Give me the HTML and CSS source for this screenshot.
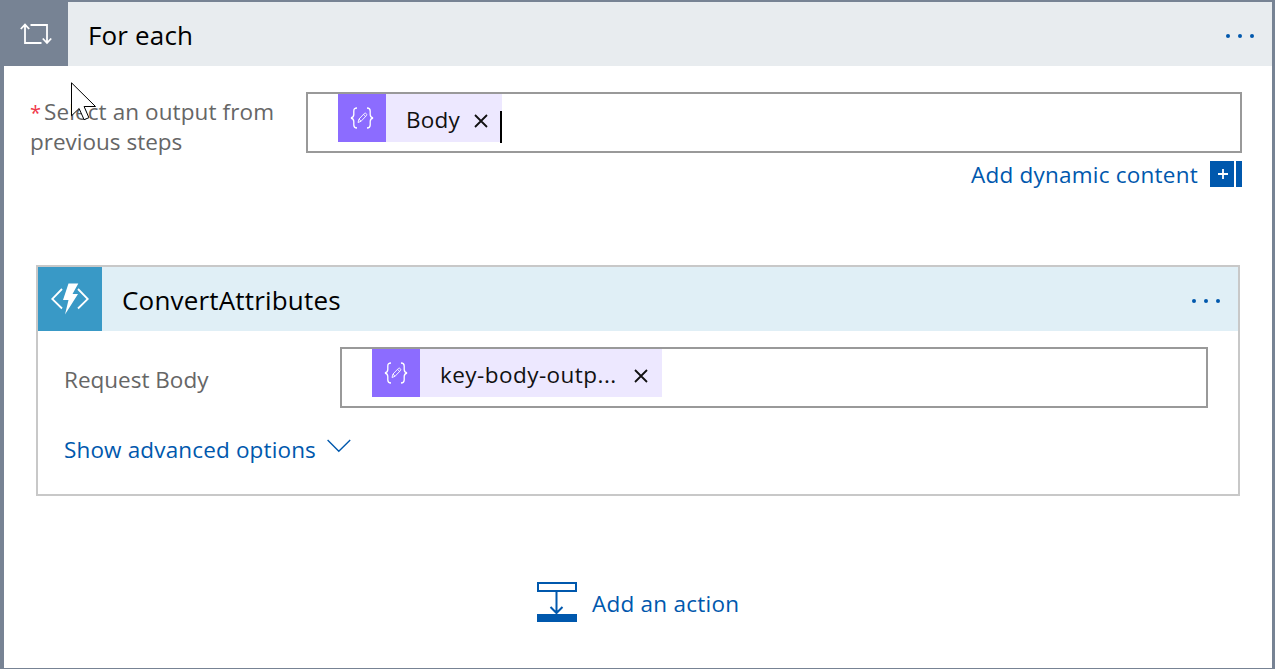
FILE: index.html
```html
<!DOCTYPE html>
<html lang="en">
<head>
<meta charset="utf-8">
<title>For each</title>
<link rel="stylesheet" href="styles.css">
</head>
<body>
<main class="scope">
  <header class="bar">
    <span class="bar-icon loop">
      <svg width="32" height="22" viewBox="0 0 32 22" fill="none" stroke="#fff" stroke-width="1.8"><path d="M5 2v18h16.500M.8 6 5 1.600 9.200 6M10.500 2H27v18M22.800 15.500 27 20l4.200-4.500"/></svg>
    </span>
    <h1 class="title t-foreach">For each</h1>
    <svg class="dots" width="30" height="6" viewBox="0 0 30 6" fill="#0058ad"><circle cx="3" cy="3" r="2"/><circle cx="15" cy="3" r="2"/><circle cx="27" cy="3" r="2"/></svg>
  </header>
  <section class="row output-row">
    <label class="label output-label"><span class="required">*</span><span class="t-select">Select an output from</span><br><span class="t-prev">previous steps</span></label>
    <div class="field">
      <div class="token">
        <span class="token-icon"><svg width="26" height="24" viewBox="0 0 26 24" fill="none" stroke="#fff" stroke-width="1.300"><path d="M8 2C5.500 2 4.800 3 4.800 5v3.500c0 2-.8 3-2.800 3.500 2 .5 2.800 1.500 2.800 3.500V19c0 2 .7 3 3.200 3M18 2c2.500 0 3.200 1 3.200 3v3.500c0 2 .8 3 2.800 3.500-2 .5-2.800 1.500-2.800 3.500V19c0 2-.7 3-3.200 3"/><path stroke-width=".9" d="m9 16.500 1-3.500 5.500-5.700c1-.8 3 .9 2 2.200L12 15.300zM10 13l2 2.300M14.600 8.300l2 2.200"/></svg></span>
        <span class="token-text t-body">Body</span>
        <svg class="close" width="14" height="14" viewBox="0 0 14 14" stroke="#111" stroke-width="1.800"><path d="m1 1 12 12M13 1 1 13"/></svg>
        <span class="caret"></span>
      </div>
    </div>
  </section>
  <div class="dynamic">
    <a class="link t-dynamic">Add dynamic content</a>
    <svg width="32" height="26" viewBox="0 0 32 26"><path fill="#0058ad" d="M0 0h24v26H0zM26 0h6v26h-6z"/><path stroke="#fff" stroke-width="1.800" d="M8 13h10M13 8v10"/></svg>
  </div>
  <article class="card">
    <header class="bar card-bar">
      <span class="bar-icon function">
        <svg width="38" height="32" viewBox="0 0 38 32"><path fill="none" stroke="#fff" stroke-width="1.800" d="M11 6 1.200 16 11 25.500M27 6l9.800 10L27 25.500"/><path fill="#fff" d="M17.500.5h9.800L21.500 11H27L14 31.500 17.500 17H12z"/></svg>
      </span>
      <h2 class="title t-convert">ConvertAttributes</h2>
      <svg class="dots" width="30" height="6" viewBox="0 0 30 6" fill="#0058ad"><circle cx="3" cy="3" r="2"/><circle cx="15" cy="3" r="2"/><circle cx="27" cy="3" r="2"/></svg>
    </header>
    <div class="row request-row">
      <label class="label request-label"><span class="t-request">Request Body</span></label>
      <div class="field">
        <div class="token wide">
          <span class="token-icon"><svg width="26" height="24" viewBox="0 0 26 24" fill="none" stroke="#fff" stroke-width="1.300"><path d="M8 2C5.500 2 4.800 3 4.800 5v3.500c0 2-.8 3-2.800 3.500 2 .5 2.800 1.500 2.800 3.500V19c0 2 .7 3 3.200 3M18 2c2.500 0 3.200 1 3.200 3v3.500c0 2 .8 3 2.800 3.500-2 .5-2.800 1.500-2.800 3.500V19c0 2-.7 3-3.200 3"/><path stroke-width=".9" d="m9 16.500 1-3.500 5.500-5.700c1-.8 3 .9 2 2.200L12 15.300zM10 13l2 2.300M14.600 8.300l2 2.200"/></svg></span>
          <span class="token-text t-key">key-body-outp...</span>
          <svg class="close" width="14" height="14" viewBox="0 0 14 14" stroke="#111" stroke-width="1.800"><path d="m1 1 12 12M13 1 1 13"/></svg>
        </div>
      </div>
    </div>
    <div class="advanced">
      <a class="link t-advanced">Show advanced options</a>
      <svg class="chevron" width="24" height="14" viewBox="0 0 24 14" fill="none" stroke="#0058ad" stroke-width="1.400"><path d="m.6 1 11.200 11.200L23.200 1"/></svg>
    </div>
  </article>
  <div class="add-action">
    <svg width="40" height="40" viewBox="0 0 40 40" fill="none" stroke="#0058ad" stroke-width="2"><path d="M1 1h38v8H1zM19.500 10v20M13.500 25l6 6 6-6"/><path fill="#0058ad" stroke="none" d="M0 32h40v8H0z"/></svg>
    <a class="link t-action">Add an action</a>
  </div>
  <svg class="pointer" width="26" height="40" viewBox="0 0 26 40"><path fill="#fff" stroke="#000" stroke-width="1" d="M.5.8v33l7.600-7.300 5 11.200 4.800-2-4.800-11.200H24.500z"/></svg>
</main>
</body>
</html>
```
FILE: styles.css
```css
* { box-sizing: border-box; }
body {
  margin: 0;
  background: #fff;
  font-family: "Open Sans", "Noto Sans", sans-serif;
}
.scope {
  position: relative;
  height: 669px;
  border: solid #778394;
  border-width: 2px 3px 1px 4px;
  overflow: hidden;
}
.bar {
  display: flex;
  align-items: center;
  height: 64px;
  background: #e8ecef;
  padding-right: 17px;
}
.card-bar { background: #e0eff6; }
.bar-icon {
  display: flex;
  align-items: center;
  justify-content: center;
  width: 64px;
  height: 64px;
  flex: none;
}
.loop { background: #778394; }
.function { background: #3999c6; }
.title {
  margin: 0 auto 0 20px;
  padding-top: 1px;
  font-size: 26px;
  font-weight: 400;
  line-height: 36px;
  color: #000;
  white-space: nowrap;
}
.t-foreach { letter-spacing: .15px; }
.t-convert { letter-spacing: .18px; }
.dots { display: block; margin-top: 4px; }
.row { display: flex; }
.output-row { padding: 26px 30px 0 26px; }
.label {
  font-size: 22.5px;
  line-height: 30px;
  color: #666;
  white-space: nowrap;
  flex: none;
  width: 276px;
}
.output-label { padding-top: 5px; }
.required {
  color: #f0384a;
  display: inline-block;
  width: 14px;
  font-size: 20px;
  line-height: 20px;
}
.t-select { letter-spacing: .1px; }
.field {
  flex: 1;
  height: 61px;
  border: 2px solid #999;
  padding-left: 30px;
}
.token {
  position: relative;
  display: flex;
  align-items: center;
  width: 164px;
  height: 48px;
  background: #ede8ff;
}
.token.wide { width: 290px; }
.token-icon {
  display: flex;
  align-items: center;
  justify-content: center;
  flex: none;
  width: 48px;
  height: 48px;
  background: #8c6cff;
}
.token-text {
  margin-left: 20px;
  padding-top: 3px;
  font-size: 22.5px;
  line-height: 30px;
  color: #111;
  white-space: nowrap;
}
.t-body { letter-spacing: .2px; }
.t-key { letter-spacing: .45px; }
.close { flex: none; margin: 6px 14px 0 auto; }
.caret {
  position: absolute;
  right: 0;
  top: 17px;
  width: 2px;
  height: 32px;
  background: #000;
}
.dynamic {
  display: flex;
  justify-content: flex-end;
  align-items: center;
  gap: 12px;
  height: 26px;
  margin: 8px 30px 0 0;
}
.link {
  font-size: 22.5px;
  line-height: 30px;
  color: #0058ad;
  white-space: nowrap;
}
.t-dynamic { letter-spacing: .23px; padding-top: 2px; }
.t-advanced { letter-spacing: .15px; }
.t-action { letter-spacing: .25px; padding-top: 3px; }
.output-row { height: 87px; }
.card {
  height: 231px;
  margin: 78px 32px 0;
  border: 2px solid #c8c8c8;
}
.request-row { height: 77px; padding: 16px 30px 0 26px; }
.request-label { padding-top: 18px; }
.advanced {
  display: flex;
  gap: 11px;
  padding: 27px 0 0 26px;
}
.chevron { margin-top: 4px; }
.add-action {
  display: flex;
  align-items: center;
  gap: 15px;
  margin: 86px 0 0 533px;
}
.pointer { position: absolute; left: 67px; top: 80px; }
```
